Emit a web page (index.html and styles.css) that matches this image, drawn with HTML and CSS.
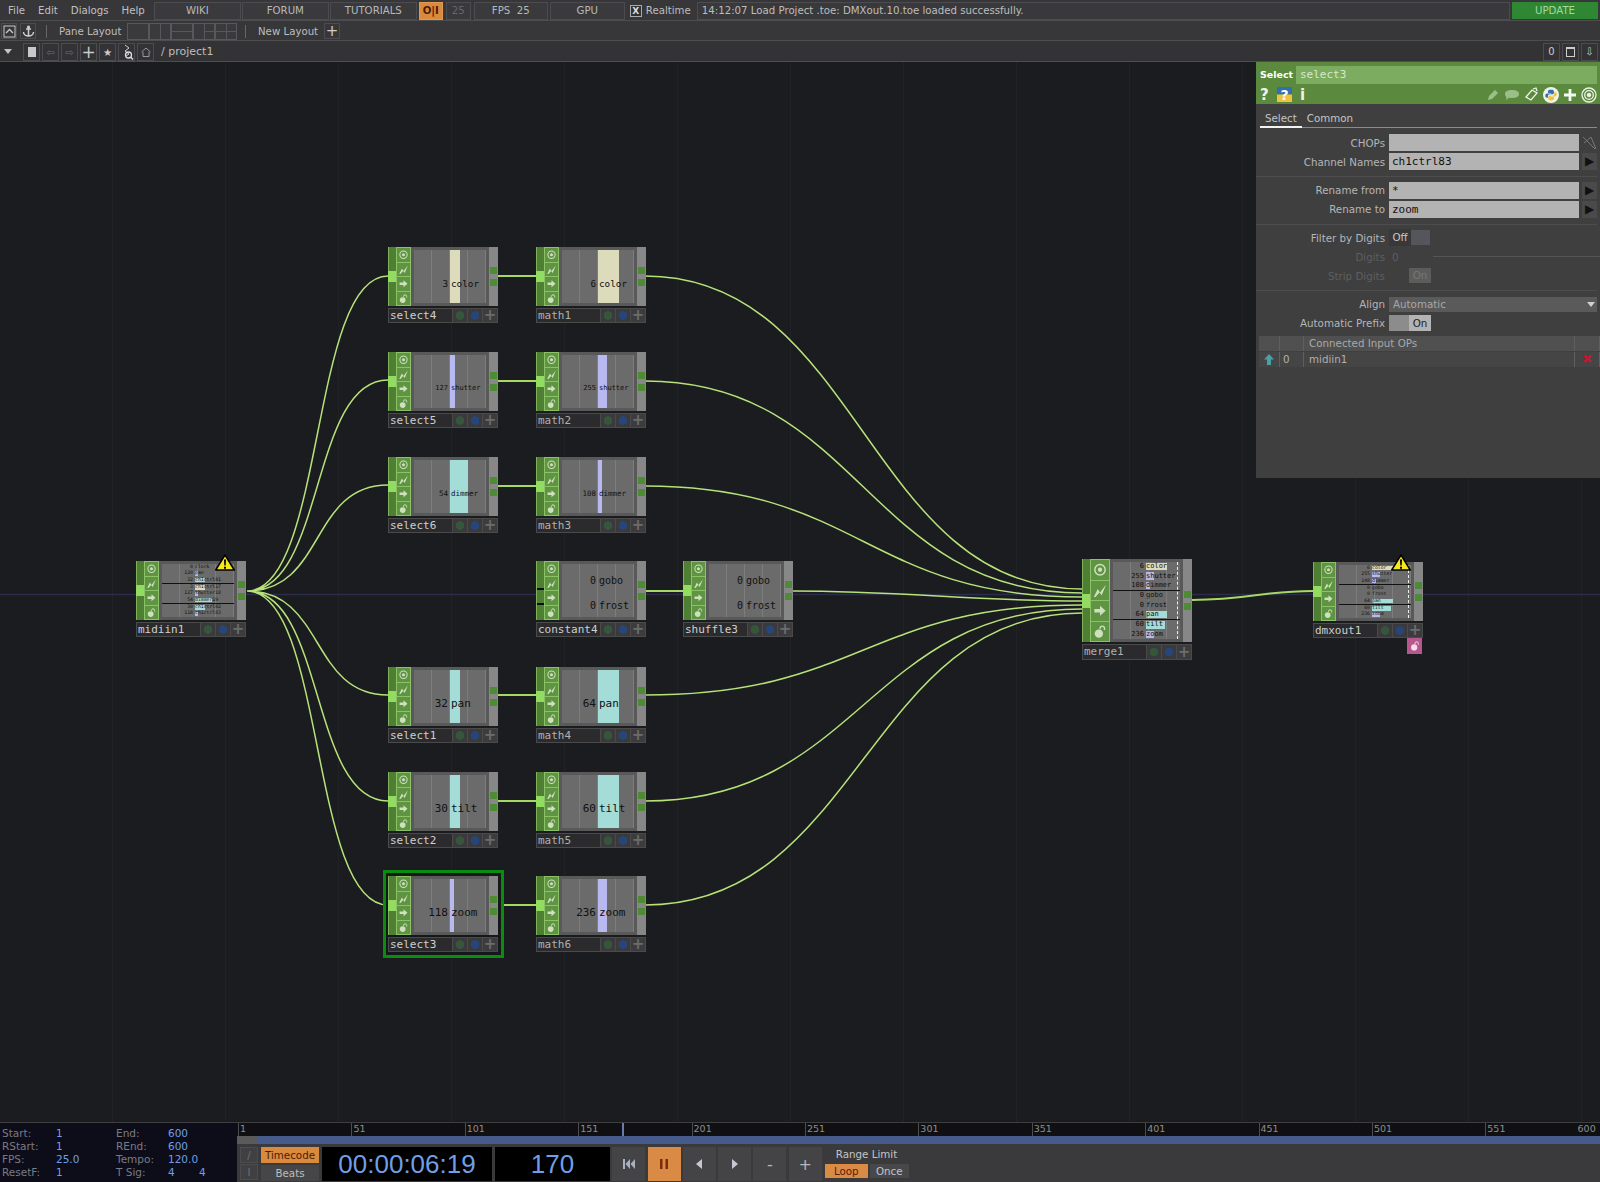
FILE: index.html
```html
<!DOCTYPE html>
<html lang="en">
<head>
    <meta charset="UTF-8">
    <title>TouchDesigner - DMXout.10.toe</title>
    <link rel="stylesheet" href="styles.css">
</head>
<body>
    <!-- shared icons -->
    <svg class="defs" width="0" height="0">
        <symbol id="i-target" viewBox="0 0 12 12"><circle cx="6" cy="6" r="4.6" fill="none" stroke="currentColor" stroke-width="1.3"/><circle cx="6" cy="6" r="1.9" fill="currentColor"/></symbol>
        <symbol id="i-wave" viewBox="0 0 12 12"><path d="M.5 11.500 L4 4.500 L6 7.500 L11.500 .5 L7.500 10 L5.500 7.500 L2 11.500Z" fill="currentColor"/></symbol>
        <symbol id="i-arrow" viewBox="0 0 12 12"><path d="M1 4.500H6V1.500L11 6 6 10.500V7.500H1Z" fill="currentColor"/></symbol>
        <symbol id="i-lock" viewBox="0 0 12 12"><circle cx="5" cy="7.700" r="3.700" fill="currentColor"/><path d="M6 3.800V3a2 2 0 0 1 4 0V4.500" fill="none" stroke="currentColor" stroke-width="1.200"/></symbol>
        <symbol id="i-warn" viewBox="0 0 20 17"><path d="M10 1 L19.300 16 H.7Z" fill="#f4e81c" stroke="#000" stroke-width="1.500" stroke-linejoin="round"/><path d="M9 5.500h2l-.3 6h-1.400zM9 12.700h2v2H9z" fill="#000"/></symbol>
    </svg>

    <!-- top bars -->
    <div class="bar bar-menu">
        <span class="menu-item">File</span>
        <span class="menu-item">Edit</span>
        <span class="menu-item">Dialogs</span>
        <span class="menu-item">Help</span>
        <span class="btn btn-link">WIKI</span>
        <span class="btn btn-link">FORUM</span>
        <span class="btn btn-link">TUTORIALS</span>
        <span class="btn btn-oi">O|I</span>
        <span class="btn btn-num">25</span>
        <span class="btn btn-fps">FPS&nbsp; 25</span>
        <span class="btn btn-gpu">GPU</span>
        <span class="check">X</span>
        <span class="realtime">Realtime</span>
        <span class="message">14:12:07 Load Project .toe: DMXout.10.toe loaded successfully.</span>
        <span class="btn-update">UPDATE</span>
    </div>

    <div class="bar bar-layout">
        <span class="ico-btn first"><svg width="13" height="13" viewBox="0 0 13 13"><rect x="1" y="1" width="11" height="11" fill="none" stroke="#c8c8c8"/><path d="M3 8l3.500-3.500L10 8" fill="none" stroke="#c8c8c8" stroke-width="1.300"/></svg></span>
        <span class="ico-btn"><svg width="13" height="13" viewBox="0 0 13 13"><path d="M6.500 1v10M4 4h5M1.500 7c0 3 3 4 5 4s5-1 5-4" fill="none" stroke="#d0d0d0" stroke-width="1.500"/><circle cx="6.500" cy="2" r="1.500" fill="#d0d0d0"/></svg></span>
        <i class="sep"></i>
        <span class="pane-label">Pane Layout</span>
        <span class="pane-box"></span>
        <span class="pane-box split-v"></span>
        <span class="pane-box split-h"></span>
        <span class="pane-box split-v split-h2"></span>
        <span class="pane-box split-v split-h"></span>
        <i class="sep sep2"></i>
        <span class="pane-label new-label">New Layout</span>
        <span class="ico-btn plus">+</span>
    </div>

    <div class="bar bar-path">
        <span class="tri-down"></span>
        <span class="ico-btn path-btn"><i class="stop"></i></span>
        <span class="ico-btn path-btn dim">&#8678;</span>
        <span class="ico-btn path-btn dim">&#8680;</span>
        <span class="ico-btn path-btn plus-b">+</span>
        <span class="ico-btn path-btn">&#9733;</span>
        <span class="ico-btn path-btn"><svg width="14" height="16" viewBox="0 0 14 16"><path d="M5 1l4 3-4 3 4 3-3 2" fill="none" stroke="#ccc"/><circle cx="8.500" cy="11" r="3" fill="none" stroke="#ddd" stroke-width="1.300"/><path d="M10.500 13l2.500 2.500" stroke="#ddd" stroke-width="1.500"/></svg></span>
        <span class="ico-btn path-btn dim"><svg width="12" height="12" viewBox="0 0 12 12"><path d="M1.500 6L6 2l4.500 4M3 6v4.500h6V6" fill="none" stroke="#999"/></svg></span>
        <span class="path-text">/ project1</span>
        <span class="path-right">
            <span class="ico-btn small">0</span>
            <span class="ico-btn small"><i class="win"></i></span>
            <span class="ico-btn small">&#8681;</span>
        </span>
    </div>

    <div class="canvas">
        <!-- wires, in page coordinates -->
        <svg class="wires" width="1600" height="1060" viewBox="0 62 1600 1060" fill="none">
            <path d="M0 594.500H1600" stroke="#2b2b4c"/>
            <path d="M247 591C325 591 310 276 388 276M247 591C325 591 310 380 388 380M247 591C325 591 310 485 388 485M247 591C325 591 310 695 388 695M247 591C325 591 310 801 388 801M247 591C325 591 310 905 388 905"/>
            <path d="M645 276C860 276 867 589 1082 589M645 381C860 381 867 593 1082 593M645 486C860 486 867 597 1082 597M793 591C900 591 975 601 1082 601M645 695C860 695 867 605 1082 605M645 801C860 801 867 609 1082 609M645 905C860 905 867 613 1082 613"/>
            <path d="M1192 600C1250 600 1260 591 1313 591" class="thick"/>
            <path d="M498 276H536M498 381H536M498 486H536M645 591H683M498 695H536M498 801H536M498 905H536" class="thick"/>
        </svg>

        <div class="op" style="left:136px;top:499px">
            <div class="op-body">
                <div class="op-in"><i class="port"></i></div>
                <div class="op-icons"><svg><use href="#i-target"/></svg><svg><use href="#i-wave"/></svg><svg><use href="#i-arrow"/></svg><svg><use href="#i-lock"/></svg></div>
                <div class="view multi tiny">
                    <div class="chan"><span class="val">0</span><span class="name">clock</span></div>
                    <div class="chan"><b class="ch-bar lav" style="width:3px"></b><span class="val">120</span><span class="name">pan</span></div>
                    <div class="chan line"><b class="ch-bar teal" style="width:10px"></b><span class="val">32</span><span class="name">ch1ctrl81</span></div>
                    <div class="chan"><b class="ch-bar tan" style="width:10px"></b><span class="val">3</span><span class="name">ch1ctrl17</span></div>
                    <div class="chan"><b class="ch-bar lav" style="width:3px"></b><span class="val">127</span><span class="name">shutter18</span></div>
                    <div class="chan line"><b class="ch-bar teal" style="width:17px"></b><span class="val">54</span><span class="name">dimmer19</span></div>
                    <div class="chan"><b class="ch-bar teal" style="width:10px"></b><span class="val">30</span><span class="name">ch1ctrl82</span></div>
                    <div class="chan"><b class="ch-bar lav" style="width:3px"></b><span class="val">118</span><span class="name">ch1ctrl83</span></div>
                </div>
                <div class="op-out"><i></i><i></i></div>
            </div>
            <div class="op-foot"><span class="op-name">midiin1</span><i class="dot green"></i><i class="dot blue"></i><i class="dot add">+</i></div>
            <svg class="warn"><use href="#i-warn"/></svg>
        </div>

        <div class="op" style="left:388px;top:185px">
            <div class="op-body">
                <div class="op-in"><i class="port"></i></div>
                <div class="op-icons"><svg><use href="#i-target"/></svg><svg><use href="#i-wave"/></svg><svg><use href="#i-arrow"/></svg><svg><use href="#i-lock"/></svg></div>
                <div class="view"><div class="chan one fs9"><b class="ch-bar tan" style="width:10px"></b><span class="val">3</span><span class="name">color</span></div></div>
                <div class="op-out"><i></i><i></i></div>
            </div>
            <div class="op-foot"><span class="op-name">select4</span><i class="dot green"></i><i class="dot blue"></i><i class="dot add">+</i></div>
        </div>

        <div class="op" style="left:536px;top:185px">
            <div class="op-body">
                <div class="op-in"><i class="port"></i></div>
                <div class="op-icons"><svg><use href="#i-target"/></svg><svg><use href="#i-wave"/></svg><svg><use href="#i-arrow"/></svg><svg><use href="#i-lock"/></svg></div>
                <div class="view"><div class="chan one fs9"><b class="ch-bar tan" style="width:21px"></b><span class="val">6</span><span class="name">color</span></div></div>
                <div class="op-out"><i></i><i></i></div>
            </div>
            <div class="op-foot"><span class="op-name dim">math1</span><i class="dot green"></i><i class="dot blue"></i><i class="dot add">+</i></div>
        </div>

        <div class="op" style="left:388px;top:290px">
            <div class="op-body">
                <div class="op-in"><i class="port"></i></div>
                <div class="op-icons"><svg><use href="#i-target"/></svg><svg><use href="#i-wave"/></svg><svg><use href="#i-arrow"/></svg><svg><use href="#i-lock"/></svg></div>
                <div class="view"><div class="chan one fs7"><b class="ch-bar lav" style="width:5px"></b><span class="val">127</span><span class="name">shutter</span></div></div>
                <div class="op-out"><i></i><i></i></div>
            </div>
            <div class="op-foot"><span class="op-name">select5</span><i class="dot green"></i><i class="dot blue"></i><i class="dot add">+</i></div>
        </div>

        <div class="op" style="left:536px;top:290px">
            <div class="op-body">
                <div class="op-in"><i class="port"></i></div>
                <div class="op-icons"><svg><use href="#i-target"/></svg><svg><use href="#i-wave"/></svg><svg><use href="#i-arrow"/></svg><svg><use href="#i-lock"/></svg></div>
                <div class="view"><div class="chan one fs7"><b class="ch-bar lav" style="width:9px"></b><span class="val">255</span><span class="name">shutter</span></div></div>
                <div class="op-out"><i></i><i></i></div>
            </div>
            <div class="op-foot"><span class="op-name dim">math2</span><i class="dot green"></i><i class="dot blue"></i><i class="dot add">+</i></div>
        </div>

        <div class="op" style="left:388px;top:395px">
            <div class="op-body">
                <div class="op-in"><i class="port"></i></div>
                <div class="op-icons"><svg><use href="#i-target"/></svg><svg><use href="#i-wave"/></svg><svg><use href="#i-arrow"/></svg><svg><use href="#i-lock"/></svg></div>
                <div class="view"><div class="chan one fs8"><b class="ch-bar teal" style="width:18px"></b><span class="val">54</span><span class="name">dimmer</span></div></div>
                <div class="op-out"><i></i><i></i></div>
            </div>
            <div class="op-foot"><span class="op-name">select6</span><i class="dot green"></i><i class="dot blue"></i><i class="dot add">+</i></div>
        </div>

        <div class="op" style="left:536px;top:395px">
            <div class="op-body">
                <div class="op-in"><i class="port"></i></div>
                <div class="op-icons"><svg><use href="#i-target"/></svg><svg><use href="#i-wave"/></svg><svg><use href="#i-arrow"/></svg><svg><use href="#i-lock"/></svg></div>
                <div class="view"><div class="chan one fs8"><b class="ch-bar lav" style="width:4px"></b><span class="val">108</span><span class="name">dimmer</span></div></div>
                <div class="op-out"><i></i><i></i></div>
            </div>
            <div class="op-foot"><span class="op-name dim">math3</span><i class="dot green"></i><i class="dot blue"></i><i class="dot add">+</i></div>
        </div>

        <div class="op" style="left:536px;top:499px">
            <div class="op-body">
                <div class="op-in"><i class="stub"></i><i class="stub"></i></div>
                <div class="op-icons"><svg><use href="#i-target"/></svg><svg><use href="#i-wave"/></svg><svg><use href="#i-arrow"/></svg><svg><use href="#i-lock"/></svg></div>
                <div class="view two"><div class="chan fs10"><span class="val">0</span><span class="name">gobo</span></div><div class="chan fs10"><span class="val">0</span><span class="name">frost</span></div></div>
                <div class="op-out"><i></i><i></i></div>
            </div>
            <div class="op-foot"><span class="op-name">constant4</span><i class="dot green"></i><i class="dot blue"></i><i class="dot add">+</i></div>
        </div>

        <div class="op" style="left:683px;top:499px">
            <div class="op-body">
                <div class="op-in"><i class="port"></i></div>
                <div class="op-icons"><svg><use href="#i-target"/></svg><svg><use href="#i-wave"/></svg><svg><use href="#i-arrow"/></svg><svg><use href="#i-lock"/></svg></div>
                <div class="view two"><div class="chan fs10"><span class="val">0</span><span class="name">gobo</span></div><div class="chan fs10"><span class="val">0</span><span class="name">frost</span></div></div>
                <div class="op-out"><i></i><i></i></div>
            </div>
            <div class="op-foot"><span class="op-name">shuffle3</span><i class="dot green"></i><i class="dot blue"></i><i class="dot add">+</i></div>
        </div>

        <div class="op" style="left:388px;top:605px">
            <div class="op-body">
                <div class="op-in"><i class="port"></i></div>
                <div class="op-icons"><svg><use href="#i-target"/></svg><svg><use href="#i-wave"/></svg><svg><use href="#i-arrow"/></svg><svg><use href="#i-lock"/></svg></div>
                <div class="view"><div class="chan one"><b class="ch-bar teal" style="width:10px"></b><span class="val">32</span><span class="name">pan</span></div></div>
                <div class="op-out"><i></i><i></i></div>
            </div>
            <div class="op-foot"><span class="op-name">select1</span><i class="dot green"></i><i class="dot blue"></i><i class="dot add">+</i></div>
        </div>

        <div class="op" style="left:536px;top:605px">
            <div class="op-body">
                <div class="op-in"><i class="port"></i></div>
                <div class="op-icons"><svg><use href="#i-target"/></svg><svg><use href="#i-wave"/></svg><svg><use href="#i-arrow"/></svg><svg><use href="#i-lock"/></svg></div>
                <div class="view"><div class="chan one"><b class="ch-bar teal" style="width:21px"></b><span class="val">64</span><span class="name">pan</span></div></div>
                <div class="op-out"><i></i><i></i></div>
            </div>
            <div class="op-foot"><span class="op-name dim">math4</span><i class="dot green"></i><i class="dot blue"></i><i class="dot add">+</i></div>
        </div>

        <div class="op" style="left:388px;top:710px">
            <div class="op-body">
                <div class="op-in"><i class="port"></i></div>
                <div class="op-icons"><svg><use href="#i-target"/></svg><svg><use href="#i-wave"/></svg><svg><use href="#i-arrow"/></svg><svg><use href="#i-lock"/></svg></div>
                <div class="view"><div class="chan one"><b class="ch-bar teal" style="width:10px"></b><span class="val">30</span><span class="name">tilt</span></div></div>
                <div class="op-out"><i></i><i></i></div>
            </div>
            <div class="op-foot"><span class="op-name">select2</span><i class="dot green"></i><i class="dot blue"></i><i class="dot add">+</i></div>
        </div>

        <div class="op" style="left:536px;top:710px">
            <div class="op-body">
                <div class="op-in"><i class="port"></i></div>
                <div class="op-icons"><svg><use href="#i-target"/></svg><svg><use href="#i-wave"/></svg><svg><use href="#i-arrow"/></svg><svg><use href="#i-lock"/></svg></div>
                <div class="view"><div class="chan one"><b class="ch-bar teal" style="width:21px"></b><span class="val">60</span><span class="name">tilt</span></div></div>
                <div class="op-out"><i></i><i></i></div>
            </div>
            <div class="op-foot"><span class="op-name dim">math5</span><i class="dot green"></i><i class="dot blue"></i><i class="dot add">+</i></div>
        </div>

        <div class="op selected" style="left:388px;top:814px">
            <div class="op-body">
                <div class="op-in"><i class="port"></i></div>
                <div class="op-icons"><svg><use href="#i-target"/></svg><svg><use href="#i-wave"/></svg><svg><use href="#i-arrow"/></svg><svg><use href="#i-lock"/></svg></div>
                <div class="view"><div class="chan one"><b class="ch-bar lav" style="width:4px"></b><span class="val">118</span><span class="name">zoom</span></div></div>
                <div class="op-out"><i></i><i></i></div>
            </div>
            <div class="op-foot"><span class="op-name">select3</span><i class="dot green"></i><i class="dot blue"></i><i class="dot add">+</i></div>
        </div>

        <div class="op" style="left:536px;top:814px">
            <div class="op-body">
                <div class="op-in"><i class="port"></i></div>
                <div class="op-icons"><svg><use href="#i-target"/></svg><svg><use href="#i-wave"/></svg><svg><use href="#i-arrow"/></svg><svg><use href="#i-lock"/></svg></div>
                <div class="view"><div class="chan one"><b class="ch-bar lav" style="width:9px"></b><span class="val">236</span><span class="name">zoom</span></div></div>
                <div class="op-out"><i></i><i></i></div>
            </div>
            <div class="op-foot"><span class="op-name dim">math6</span><i class="dot green"></i><i class="dot blue"></i><i class="dot add">+</i></div>
        </div>

        <div class="op tall" style="left:1082px;top:497px">
            <div class="op-body">
                <div class="op-in"><i class="port"></i></div>
                <div class="op-icons"><svg><use href="#i-target"/></svg><svg><use href="#i-wave"/></svg><svg><use href="#i-arrow"/></svg><svg><use href="#i-lock"/></svg></div>
                <div class="view multi dash">
                    <div class="chan"><b class="ch-bar tan" style="width:21px"></b><span class="val">6</span><span class="name">color</span></div>
                    <div class="chan"><b class="ch-bar lav" style="width:8px"></b><span class="val">255</span><span class="name">shutter</span></div>
                    <div class="chan line"><b class="ch-bar lav" style="width:4px"></b><span class="val">108</span><span class="name">dimmer</span></div>
                    <div class="chan"><span class="val">0</span><span class="name">gobo</span></div>
                    <div class="chan"><span class="val">0</span><span class="name">frost</span></div>
                    <div class="chan line"><b class="ch-bar teal" style="width:21px"></b><span class="val">64</span><span class="name">pan</span></div>
                    <div class="chan"><b class="ch-bar teal" style="width:19px"></b><span class="val">60</span><span class="name">tilt</span></div>
                    <div class="chan"><b class="ch-bar lav" style="width:8px"></b><span class="val">236</span><span class="name">zoom</span></div>
                </div>
                <div class="op-out"><i></i><i></i></div>
            </div>
            <div class="op-foot"><span class="op-name dim">merge1</span><i class="dot green"></i><i class="dot blue"></i><i class="dot add">+</i></div>
        </div>

        <div class="op" style="left:1313px;top:500px">
            <div class="op-body">
                <div class="op-in"><i class="port"></i></div>
                <div class="op-icons"><svg><use href="#i-target"/></svg><svg><use href="#i-wave"/></svg><svg><use href="#i-arrow"/></svg><svg><use href="#i-lock"/></svg></div>
                <div class="view multi tiny dash">
                    <div class="chan"><b class="ch-bar tan" style="width:21px"></b><span class="val">6</span><span class="name">color</span></div>
                    <div class="chan"><b class="ch-bar lav" style="width:8px"></b><span class="val">255</span><span class="name">shutter</span></div>
                    <div class="chan line"><b class="ch-bar lav" style="width:4px"></b><span class="val">108</span><span class="name">dimmer</span></div>
                    <div class="chan"><span class="val">0</span><span class="name">gobo</span></div>
                    <div class="chan"><span class="val">0</span><span class="name">frost</span></div>
                    <div class="chan line"><b class="ch-bar teal" style="width:21px"></b><span class="val">64</span><span class="name">pan</span></div>
                    <div class="chan"><b class="ch-bar teal" style="width:19px"></b><span class="val">60</span><span class="name">tilt</span></div>
                    <div class="chan"><b class="ch-bar lav" style="width:8px"></b><span class="val">236</span><span class="name">zoom</span></div>
                </div>
                <div class="op-out"><i></i><i></i></div>
            </div>
            <div class="op-foot"><span class="op-name">dmxout1</span><i class="dot green"></i><i class="dot blue"></i><i class="dot add">+</i></div>
            <svg class="warn warn-right"><use href="#i-warn"/></svg>
            <span class="pink-btn"><svg width="10" height="10"><use href="#i-lock"/></svg></span>
        </div>

        <!-- parameter panel -->
        <div class="panel">
            <div class="panel-head">
                <div class="head-row">
                    <span class="head-type">Select</span>
                    <span class="head-name">select3</span>
                </div>
                <div class="head-tools">
                    <span class="tool-q">?</span>
                    <svg width="17" height="17" viewBox="0 0 17 17"><rect x="1" y="1" width="15" height="7.500" fill="#2f6fb2"/><rect x="1" y="8.500" width="15" height="7.500" fill="#f0c33c"/><text x="8.500" y="13.500" text-anchor="middle" class="tool-text">?</text></svg>
                    <span class="tool-i">i</span>
                    <span class="tools-right">
                        <svg width="14" height="14" viewBox="0 0 14 14"><path d="M2 12l1-4 6-6 3 3-6 6z" fill="#9cbf8a"/></svg>
                        <svg width="16" height="14" viewBox="0 0 16 14"><path d="M1 6c0-3 3-4 7-4s7 1 7 4-3 4-7 4c-1 0-2 0-3-.2L2 12l.5-3C1.500 8.500 1 7.200 1 6z" fill="#9cbf8a"/></svg>
                        <svg width="15" height="15" viewBox="0 0 15 15"><path d="M2 10l6-7 5 3-6 7z M9 2l3-1 1 3" fill="none" stroke="#eef3e8" stroke-width="1.300"/></svg>
                        <svg width="16" height="16" viewBox="0 0 16 16"><circle cx="8" cy="8" r="8" fill="#f2f2ea"/><path d="M8 2.500c-2 0-3 .7-3 2v1.500h3.200v.6H4c-1.200 0-1.700 1-1.700 2.100s.5 2 1.600 2h1V9c0-1 .8-1.800 1.800-1.800h2.800c.8 0 1.400-.7 1.400-1.500V4.500c0-1.300-1-2-3-2z" fill="#2f6fb2"/><path d="M8 13.500c2 0 3-.7 3-2V10H7.800v-.6H12c1.200 0 1.700-1 1.700-2.100s-.5-2-1.600-2h-.9V7c0 1-.8 1.800-1.800 1.800H6.600c-.8 0-1.400.7-1.400 1.500v1.200c0 1.300 1 2 2.800 2z" fill="#f0c33c"/></svg>
                        <svg width="14" height="14" viewBox="0 0 14 14"><path d="M7 1v12M1 7h12" stroke="#f4f6f0" stroke-width="2.800"/></svg>
                        <svg width="16" height="16" viewBox="0 0 16 16" fill="none" stroke="#eef3e8"><circle cx="8" cy="8" r="7" stroke-width="1.300"/><circle cx="8" cy="8" r="4.300" stroke-width="1.300"/><circle cx="8" cy="8" r="1.800" fill="#eef3e8"/></svg>
                    </span>
                </div>
            </div>
            <div class="tabs"><span class="tab on">Select</span><span class="tab">Common</span></div>

            <div class="param first"><label>CHOPs</label><span class="field"></span><svg class="wand" width="16" height="16" viewBox="0 0 16 16"><path d="M2 2l12 12M3 8l7-6 5 12" fill="none" stroke="#777"/></svg></div>
            <div class="param"><label>Channel Names</label><span class="field">ch1ctrl83</span><span class="go">&#9654;</span></div>
            <hr class="divider">
            <div class="param"><label>Rename from</label><span class="field">*</span><span class="go">&#9654;</span></div>
            <div class="param"><label>Rename to</label><span class="field">zoom</span><span class="go">&#9654;</span></div>
            <hr class="divider">
            <div class="param"><label>Filter by Digits</label><span class="toggle-off">Off</span><i class="toggle-box"></i></div>
            <div class="param off"><label>Digits</label><span class="digit-val">0</span><i class="slider"></i></div>
            <div class="param off"><label>Strip Digits</label><span class="strip-on">On</span></div>
            <hr class="divider">
            <div class="param"><label>Align</label><span class="select">Automatic<i class="tri"></i></span></div>
            <div class="param"><label>Automatic Prefix</label><span class="prefix"><i></i><b>On</b></span></div>

            <div class="table-row thead"><span class="c1"></span><span class="c2"></span><span class="c3">Connected Input OPs</span><span class="c4"></span></div>
            <div class="table-row"><span class="c1"><svg width="10" height="11" viewBox="0 0 10 11"><path d="M5 0l5 5.500H7V11H3V5.500H0z" fill="#4ba0a6"/></svg></span><span class="c2">0</span><span class="c3">midiin1</span><span class="c4 del">&#10006;</span></div>
        </div>
    </div>

    <!-- timeline -->
    <div class="bottom">
        <div class="stats">
            <span class="lb">Start:</span><span class="v">1</span><span class="lb">End:</span><span class="v">600</span><span></span>
            <span class="lb">RStart:</span><span class="v">1</span><span class="lb">REnd:</span><span class="v">600</span><span></span>
            <span class="lb">FPS:</span><span class="v">25.0</span><span class="lb">Tempo:</span><span class="v">120.0</span><span></span>
            <span class="lb">ResetF:</span><span class="v">1</span><span class="lb">T Sig:</span><span class="v">4</span><span class="v">4</span>
        </div>
        <div class="time">
            <div class="ruler">
                <span class="seg">1</span><span class="seg">51</span><span class="seg">101</span><span class="seg">151</span><span class="seg">201</span><span class="seg">251</span><span class="seg">301</span><span class="seg">351</span><span class="seg">401</span><span class="seg">451</span><span class="seg">501</span><span class="seg last"><span>551</span><span>600</span></span>
                <i class="cursor"></i>
            </div>
            <div class="range"><i class="range-handle"></i></div>
            <div class="controls">
                <div class="mini-col"><span class="mini">/</span><span class="mini">I</span></div>
                <div class="mode-col"><span class="mode on">Timecode</span><span class="mode">Beats</span></div>
                <div class="display code">00:00:06:19</div>
                <div class="display frame">170</div>
                <span class="play"><svg width="12" height="10" viewBox="0 0 12 10"><path d="M0 0h2v10H0zM7 0v10L2.500 5zM12 0v10L7.500 5z" fill="#a9b0bd"/></svg></span>
                <span class="play on"><svg width="8" height="10" viewBox="0 0 8 10"><path d="M0 0h2.500v10H0zM5.500 0H8v10H5.500z" fill="#7c2a10"/></svg></span>
                <span class="play"><svg width="6" height="10" viewBox="0 0 6 10"><path d="M6 0v10L0 5z" fill="#c4c8d0"/></svg></span>
                <span class="play"><svg width="6" height="10" viewBox="0 0 6 10"><path d="M0 0v10l6-5z" fill="#c4c8d0"/></svg></span>
                <span class="play sym">-</span>
                <span class="play sym">+</span>
                <div class="range-limit">
                    <div class="rl-title">Range Limit</div>
                    <div class="rl-btns"><span class="rl on">Loop</span><span class="rl">Once</span></div>
                </div>
            </div>
        </div>
    </div>
</body>
</html>
```

FILE: styles.css
```css
*, *::before, *::after {
    margin: 0;
    padding: 0;
    box-sizing: border-box;
}

html, body {
    width: 1600px;
    height: 1182px;
    overflow: hidden;
}

body {
    display: flex;
    flex-direction: column;
    background: #1b1c1f;
    color: #bdbdbd;
    font-family: "DejaVu Sans", sans-serif;
    font-size: 10.3px;
}

.defs {
    position: absolute;
}

/* top bars */
.bar {
    display: flex;
    align-items: center;
    flex: none;
    background: #37373a;
    border-bottom: 1px solid #4e4e50;
}

.bar-menu {
    height: 21px;
    padding-top: 1px;
}

.bar-layout {
    height: 20px;
    padding-top: 1px;
}

.bar-path {
    height: 21px;
    padding-top: 1px;
    background: #333336;
}

.menu-item {
    margin-left: 8px;
    margin-right: 5px;
    color: #c0c0c0;
    font-size: 10.2px;
}

.btn {
    display: flex;
    align-items: center;
    justify-content: center;
    height: 18px;
    border: 1px solid #4c4c50;
    background: #3a3a3d;
    color: #b8b8b8;
    font-size: 10.2px;
}

.btn-link {
    width: 87px;
    margin-right: 1px;
}

.bar-menu .menu-item:nth-child(4) + .btn {
    margin-left: 4px;
}

.btn-oi {
    width: 24px;
    margin-left: 1px;
    background: #d98a3d;
    border-color: #e09a52;
    color: #4b1c08;
    font-weight: bold;
}

.btn-num {
    width: 25px;
    margin-left: 3px;
    color: #666;
}

.btn-fps {
    width: 74px;
    margin-left: 3px;
}

.btn-gpu {
    width: 75px;
    margin-left: 2px;
}

.check {
    display: flex;
    align-items: center;
    justify-content: center;
    width: 12px;
    height: 12px;
    margin-left: 5px;
    border: 1px solid #aaa;
    background: #333;
    color: #ddd;
    font-size: 9px;
    font-weight: bold;
}

.realtime {
    margin-left: 4px;
    width: 51px;
    font-size: 10.2px;
}

.message {
    display: flex;
    align-items: center;
    flex: 1;
    height: 18px;
    padding-left: 4px;
    border: 1px solid #4c4c50;
    background: #39393c;
    font-size: 10.2px;
}

.btn-update {
    display: flex;
    align-items: center;
    justify-content: center;
    flex: none;
    width: 86px;
    height: 17px;
    margin: 0 2px;
    background: #2f8733;
    color: #a5d8a0;
    font-size: 10.2px;
}

.ico-btn {
    display: flex;
    align-items: center;
    justify-content: center;
    width: 16px;
    height: 16px;
    margin-left: 3px;
    border: 1px solid #4c4c50;
    color: #ccc;
}

.ico-btn.first {
    margin-left: 1px;
}

.sep {
    width: 1px;
    height: 13px;
    margin: 0 12px 0 10px;
    background: #666;
}

.sep2 {
    margin: 0 12px 0 8px;
}

.pane-label {
    width: 68px;
    font-size: 10.2px;
}

.new-label {
    width: 66px;
}

.pane-box {
    width: 22px;
    height: 17px;
    border: 1px solid #58585c;
    background-color: #3a3a3d;
}

.pane-box.split-v {
    background-image: linear-gradient(90deg, transparent 10px, #58585c 10px, #58585c 11px, transparent 11px);
}

.pane-box.split-h {
    background-image: linear-gradient(transparent 7px, #58585c 7px, #58585c 8px, transparent 8px);
}

.pane-box.split-v.split-h {
    background-image: linear-gradient(90deg, transparent 10px, #58585c 10px, #58585c 11px, transparent 11px), linear-gradient(transparent 7px, #58585c 7px, #58585c 8px, transparent 8px);
}

.pane-box.split-h2 {
    background-image: linear-gradient(90deg, transparent 10px, #58585c 10px, #58585c 11px, transparent 11px), linear-gradient(90deg, transparent 10px, transparent 11px, #58585c 11px);
    background-size: 100% 100%, 100% 1px;
    background-position: 0 0, 0 7px;
    background-repeat: no-repeat;
}

.plus {
    margin-left: 0;
    font-size: 15px;
}

.tri-down {
    width: 0;
    height: 0;
    margin: 0 9px 0 4px;
    border-left: 4px solid transparent;
    border-right: 4px solid transparent;
    border-top: 5px solid #c4c4c4;
}

.path-btn {
    width: 17px;
    height: 18px;
    margin-left: 2px;
}

.path-btn.dim {
    color: #6a6a6a;
}

.plus-b {
    font-size: 17px;
}

.stop {
    width: 8px;
    height: 10px;
    background: #c8c8c8;
}

.path-text {
    margin-left: 7px;
    font-size: 11px;
}

.path-right {
    display: flex;
    margin-left: auto;
    margin-right: 2px;
}

.small {
    height: 18px;
    width: 17px;
    margin-left: 2px;
    font-size: 10px;
}

.win {
    width: 9px;
    height: 10px;
    border: 1px solid #ccc;
    border-top-width: 2px;
}

/* network canvas */
.canvas {
    position: relative;
    flex: none;
    height: 1060px;
    background-color: #1b1c1f;
    background-image: repeating-linear-gradient(90deg, transparent 0, transparent 112px, #212226 112px, #212226 113px);
    overflow: hidden;
}

.wires {
    position: absolute;
    left: 0;
    top: 0;
    stroke: #b7e27a;
    stroke-width: 1.5;
}

.wires .thick {
    stroke: #a6d964;
    stroke-width: 2;
}

.op {
    position: absolute;
    width: 110px;
}

.op.selected::before {
    content: "";
    position: absolute;
    inset: -6px -6px -6px -5px;
    z-index: -1;
    border: 3px solid #0b8c10;
    background: #14181a;
}

.canvas .op.selected {
    z-index: 1;
}

.op-body {
    display: flex;
    height: 59px;
    background: #595959;
    color: #111;
}

.op-in {
    display: flex;
    flex-direction: column;
    justify-content: center;
    flex: none;
    width: 8px;
    background: #4f7f33;
    border-left: 1px solid #7fb25a;
}

.port {
    display: block;
    width: 8px;
    height: 11px;
    margin-left: -1px;
    background: #93dc62;
}

.stub {
    display: block;
    width: 7px;
    height: 2px;
    margin-bottom: 13px;
    background: #0a0a0a;
}

.stub:first-child {
    margin-top: 12px;
}

.stub:last-child {
    margin-bottom: 0;
}

.op-icons {
    display: flex;
    flex-direction: column;
    flex: none;
    width: 15px;
    background: #5f9542;
    border: 1px solid #8cc168;
    color: #cfe0bf;
}

.op-icons svg {
    flex: 1;
    width: 100%;
    min-height: 0;
    padding: 2px 1px;
    border-bottom: 1px solid #8cc168;
}

.op-icons svg:last-child {
    border-bottom: none;
}

.view {
    position: relative;
    display: flex;
    flex-direction: column;
    flex: 1;
    min-width: 0;
    margin: 3px;
    overflow: hidden;
    background-color: #6b6b6b;
    background-image: repeating-linear-gradient(90deg, transparent 0, transparent 17px, #7d7d7d 17px, #7d7d7d 18px);
    font-family: "DejaVu Sans Mono", monospace;
    font-size: 11px;
}

.view.two {
    padding-top: 4px;
}

.view.two .chan {
    flex: none;
    height: 25px;
}

.chan {
    position: relative;
    display: flex;
    align-items: center;
    flex: 1;
    min-height: 0;
    line-height: 1;
}

.chan.one {
    padding-top: 14px;
}

.fs7 {
    font-size: 7px;
}

.fs8 {
    font-size: 7.500px;
}

.fs9 {
    font-size: 9.300px;
}

.fs10 {
    font-size: 10px;
}

.val {
    position: relative;
    width: 34px;
    margin-right: 3px;
    text-align: right;
    flex: none;
}

.name {
    position: relative;
    white-space: nowrap;
}

.ch-bar {
    position: absolute;
    left: 36px;
    top: 0;
    bottom: 0;
}

.ch-bar.tan {
    background: #dcdcbc;
}

.ch-bar.lav {
    background: #b9b9f2;
}

.ch-bar.teal {
    background: #a4dcd8;
}

.multi {
    font-size: 7px;
}

.multi .val {
    width: 31px;
    margin-right: 2px;
}

.multi .ch-bar {
    left: 33px;
    top: 1px;
    bottom: 1px;
}

.tiny {
    font-size: 4.800px;
}

.chan.line {
    border-bottom: 1px solid #111;
}

.dash::after {
    content: "";
    position: absolute;
    right: 2px;
    top: 0;
    bottom: 0;
    border-right: 1px dashed #eee;
}

.op-out {
    display: flex;
    flex-direction: column;
    justify-content: center;
    gap: 5px;
    flex: none;
    width: 9px;
    background: #878787;
}

.op-out i {
    display: block;
    width: 7px;
    height: 7px;
    margin-left: 1px;
    background: #4f8a35;
}

.op-foot {
    display: flex;
    gap: 1px;
    height: 15px;
    margin-top: 2px;
    padding: 1px;
    background: #4a4a4a;
}

.op-name {
    flex: 1;
    padding-left: 1px;
    background: #2b2b2d;
    color: #cfcfcf;
    font-family: "DejaVu Sans Mono", monospace;
    font-size: 11px;
    line-height: 13px;
    white-space: nowrap;
}

.op-name.dim {
    color: #b0b0b0;
}

.dot {
    display: flex;
    align-items: center;
    justify-content: center;
    flex: none;
    width: 14px;
    background: #3c3c3e;
    font-style: normal;
}

.dot.green {
    background: radial-gradient(circle, #35563a 0, #35563a 4px, #3a3a3c 4.500px);
}

.dot.blue {
    background: radial-gradient(circle, #26457a 0, #26457a 4px, #3a3a3c 4.500px);
}

.dot.add {
    color: #6c6c6c;
    font-size: 15px;
    font-weight: bold;
    line-height: 13px;
}

.warn {
    position: absolute;
    right: 11px;
    top: -7px;
    width: 20px;
    height: 17px;
}

.warn-right {
    right: 12px;
    top: -8px;
}

.pink-btn {
    position: absolute;
    right: 1px;
    top: 76px;
    display: flex;
    align-items: center;
    justify-content: center;
    width: 15px;
    height: 16px;
    background: #b8568f;
    color: #f4dce8;
}

.tall .op-body {
    height: 83px;
}

.tall .op-icons {
    width: 20px;
}

.tall .op-in .port {
    height: 14px;
}

.tall .op-icons svg {
    padding: 3px 2px;
}

.tall .op-foot {
    height: 16px;
}

/* parameter panel */
.panel {
    position: absolute;
    right: 0;
    top: 0;
    z-index: 2;
    width: 344px;
    height: 416px;
    background: #3f3f40;
}

.panel-head {
    height: 42px;
    background: #5b8a3e;
}

.head-row {
    display: flex;
    align-items: center;
    height: 23px;
    padding: 3px 3px 1px 4px;
}

.head-type {
    width: 36px;
    color: #fff;
    font-size: 9.500px;
    font-weight: bold;
}

.head-name {
    flex: 1;
    height: 18px;
    padding-left: 4px;
    background: #7cac60;
    color: #d8e8cc;
    font-family: "DejaVu Sans Mono", monospace;
    font-size: 11px;
    line-height: 18px;
}

.head-tools {
    display: flex;
    align-items: center;
    height: 19px;
    padding-left: 4px;
    color: #eef3e8;
}

.tool-q {
    width: 16px;
    font-size: 15px;
    font-weight: bold;
}

.tool-text {
    fill: #fff;
    font-family: "DejaVu Sans", sans-serif;
    font-size: 14px;
    font-weight: bold;
}

.tool-i {
    margin-left: 7px;
    font-size: 15px;
    font-weight: bold;
}

.tools-right {
    display: flex;
    align-items: center;
    gap: 4px;
    margin-left: auto;
    margin-right: 3px;
}

.tabs {
    display: flex;
    height: 24px;
    margin: 0 3px 0 4px;
    border-bottom: 1px solid #8a8a8a;
    color: #c4c4c4;
    line-height: 28px;
}

.tab {
    padding: 0 5px;
}

.tab.on {
    border-bottom: 2px solid #f2f2f2;
    margin-bottom: -1px;
}

.param {
    display: flex;
    align-items: center;
    height: 19px;
}

.param.first {
    margin-top: 5px;
}

.param label {
    flex: none;
    width: 129px;
    margin-right: 4px;
    text-align: right;
    color: #b5b5b5;
}

.param.off label {
    color: #5e5e5e;
}

.field {
    flex: none;
    width: 190px;
    height: 17px;
    padding-left: 3px;
    background: #b3b3b3;
    color: #111;
    font-family: "DejaVu Sans Mono", monospace;
    font-size: 11px;
    line-height: 17px;
}

.go {
    width: 15px;
    height: 17px;
    margin-left: 3px;
    background: #4a4a4a;
    color: #111;
    font-size: 12px;
    line-height: 17px;
    text-align: center;
}

.wand {
    margin-left: 2px;
}

.divider {
    height: 1px;
    margin: 5px 3px 3.500px 0;
    border: none;
    background: #4d4d4e;
}

.toggle-off {
    width: 22px;
    height: 17px;
    background: #383838;
    color: #c8c8c8;
    line-height: 17px;
    text-align: center;
}

.toggle-box {
    width: 19px;
    height: 15px;
    background: #55555c;
}

.digit-val {
    width: 44px;
    padding-left: 3px;
    color: #5e5e5e;
}

.slider {
    flex: 1;
    height: 1px;
    background: #555;
    border-left: 8px solid #555;
}

.strip-on {
    width: 22px;
    height: 15px;
    margin-left: 20px;
    background: #5c5c5c;
    color: #777;
    line-height: 15px;
    text-align: center;
}

.select {
    display: flex;
    align-items: center;
    width: 208px;
    height: 15px;
    padding-left: 4px;
    background: #5a5a5a;
    color: #a8a8a8;
}

.tri {
    width: 0;
    height: 0;
    margin-left: auto;
    margin-right: 2px;
    border-left: 4px solid transparent;
    border-right: 4px solid transparent;
    border-top: 5px solid #d0d0d0;
}

.prefix {
    display: flex;
    width: 42px;
    height: 16px;
    background: #8c8c8c;
}

.prefix i {
    width: 20px;
}

.prefix b {
    flex: 1;
    background: #b3b3b3;
    color: #222;
    font-weight: normal;
    line-height: 16px;
    text-align: center;
}

.table-row {
    display: flex;
    height: 15px;
    margin: 1px 0 0 3px;
    background: #454546;
    color: #b0b0b0;
    line-height: 15px;
}

.table-row.thead {
    margin-top: 3.500px;
    background: #505051;
    color: #a8a8a8;
}

.table-row span {
    border-right: 1px solid #5f5f60;
}

.c1 {
    width: 21px;
    display: flex;
    align-items: center;
    justify-content: center;
}

.c2 {
    width: 24px;
    padding-left: 3px;
}

.c3 {
    width: 271px;
    padding-left: 5px;
}

.c4 {
    flex: 1;
}

.del {
    color: #c01830;
    font-size: 12px;
    text-align: center;
    border-right: none;
}

/* timeline */
.bottom {
    display: flex;
    flex: none;
    height: 60px;
    border-top: 1px solid #3e3e40;
}

.stats {
    display: grid;
    grid-template-columns: 54px 60px 52px 31px 1fr;
    grid-auto-rows: 13px;
    flex: none;
    width: 237px;
    padding: 4px 0 0 2px;
    background: #0d0d1a;
    font-size: 10.5px;
    line-height: 13px;
}

.lb {
    color: #7a7a86;
}

.v {
    color: #6f9fe6;
}

.time {
    display: flex;
    flex-direction: column;
    flex: 1;
    background: #3a3a3c;
}

.ruler {
    position: relative;
    display: flex;
    height: 13px;
    padding-left: 1px;
    background: #101012;
}

.seg {
    flex: none;
    width: 113.400px;
    padding-left: 1px;
    border-left: 1px solid #4c4c4e;
    color: #8e8e8e;
    font-size: 9.500px;
    line-height: 12px;
}

.seg.last {
    display: flex;
    justify-content: space-between;
    padding-right: 3px;
}

.cursor {
    position: absolute;
    left: 385px;
    top: 0;
    bottom: 0;
    width: 2px;
    background: #6a7ab0;
}

.range {
    height: 8px;
    background: #465a8c;
}

.range-handle {
    display: block;
    width: 20px;
    height: 8px;
    background: #5a5a5a;
}

.controls {
    display: flex;
    align-items: flex-start;
    flex: 1;
    padding: 3px 0 0 3px;
}

.mini-col {
    display: flex;
    flex-direction: column;
    gap: 1px;
    flex: none;
    width: 18px;
}

.mini {
    height: 16px;
    border: 1px solid #4c4c4e;
    background: #404042;
    color: #6e6e70;
    line-height: 14px;
    text-align: center;
}

.mode-col {
    display: flex;
    flex-direction: column;
    gap: 2px;
    flex: none;
    width: 58px;
    margin-left: 3px;
}

.mode {
    height: 16px;
    background: #464648;
    color: #bdbdbd;
    line-height: 16px;
    text-align: center;
}

.mode.on {
    background: #d98a3d;
    color: #4b1c08;
}

.display {
    flex: none;
    height: 34px;
    background: #000;
    color: #6f9fe6;
    font-family: "Liberation Sans", Arial, sans-serif;
    font-size: 26px;
    line-height: 34px;
    text-align: center;
}

.code {
    width: 170px;
    margin-left: 3px;
}

.frame {
    width: 115px;
    margin-left: 3px;
}

.play {
    display: flex;
    align-items: center;
    justify-content: center;
    flex: none;
    width: 33px;
    height: 34px;
    margin-left: 2.300px;
    background: #444447;
    color: #b6b6b8;
    font-size: 16px;
}

.play.on {
    background: #d98a45;
}

.range-limit {
    margin-left: 3px;
    width: 86px;
}

.rl-title {
    margin-left: 11px;
    height: 17px;
    color: #c4c4c4;
    line-height: 15px;
}

.rl-btns {
    display: flex;
    gap: 2px;
}

.rl {
    width: 43px;
    height: 14px;
    background: #48484b;
    color: #c4c4c4;
    line-height: 14px;
    text-align: center;
}

.rl:last-child {
    width: 39px;
}

.rl.on {
    background: #d98a45;
    color: #5a1c08;
}
```
